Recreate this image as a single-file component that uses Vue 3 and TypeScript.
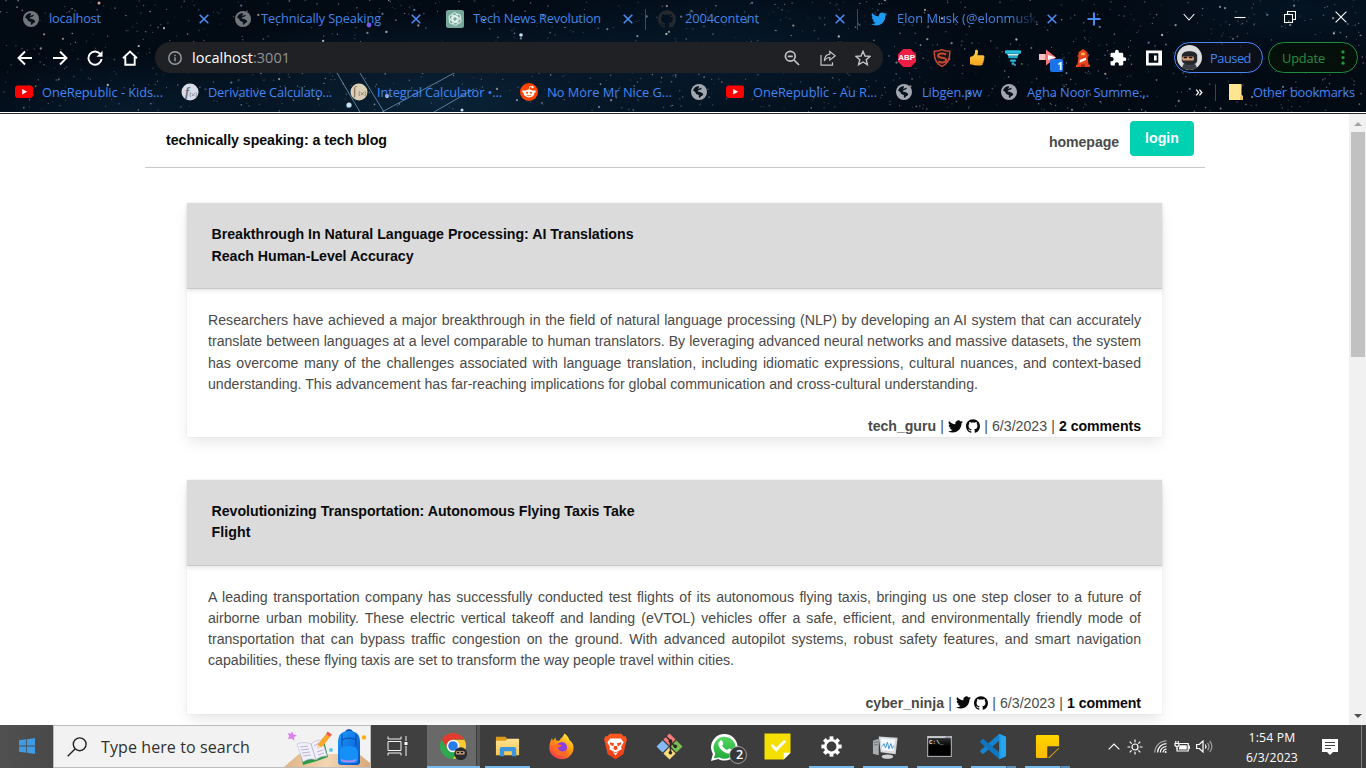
<script setup lang="ts">
interface Tab { icon: string; title: string; w: number; sep?: boolean; fade?: boolean }
interface Mark { text: string; kind: string }
interface Bookmark { icon: string; title?: string; w?: number; marks?: Mark[] }
interface Extension { icon: string; mark?: Mark }
interface Post {
  title: { text: string; w: number }[]
  lines: string[]
  lastWidth: number
  author: string
  authorWidth: number
  date: string
  comments: string
  commentsWidth: number
}
interface Task { icon: string; state?: 'full' | 'group' | 'active'; mark?: Mark }
interface Star { x: number; y: number; r: number; o: number; c: string }

// Spreads a label's glyphs so that it takes the given width in pixels.
const vFit = {
  mounted(el: HTMLElement, binding: { value: number }) {
    const n = (el.textContent ?? '').trim().length
    if (!n || !binding.value) return
    const natural = el.getBoundingClientRect().width
    el.style.letterSpacing = `${(binding.value - natural) / n}px`
  },
}

const tabs: Tab[] = [
  { icon: 'globe-dim', title: 'localhost', w: 52 },
  { icon: 'globe-dim', title: 'Technically Speaking', w: 120 },
  { icon: 'gpt', title: 'Tech News Revolution', w: 128 },
  { icon: 'github-dim', title: '2004content', w: 74, sep: true },
  { icon: 'twitter-blue', title: 'Elon Musk (@elonmusk)', w: 143, sep: true, fade: true },
]

const extensions: Extension[] = [
  { icon: 'abp', mark: { text: 'ABP', kind: 'm-abp' } },
  { icon: 'seo' },
  { icon: 'thumb' },
  { icon: 'funnel' },
  { icon: 'arrow-ext', mark: { text: '1', kind: 'm-one' } },
  { icon: 'lighthouse' },
  { icon: 'puzzle' },
  { icon: 'panel' },
]

const bookmarks: Bookmark[] = [
  { icon: 'youtube', title: 'OneRepublic - Kids...', w: 121 },
  { icon: 'deriv', title: 'Derivative Calculato...', w: 124, marks: [{ text: 'f', kind: 'm-f' }] },
  { icon: 'integ', title: 'Integral Calculator •...', w: 125, marks: [{ text: '∫', kind: 'm-int' }] },
  { icon: 'reddit', title: 'No More Mr Nice G...', w: 125 },
  { icon: 'globe' },
  { icon: 'youtube', title: 'OneRepublic - Au R...', w: 124 },
  { icon: 'globe', title: 'Libgen.pw', w: 60 },
  { icon: 'globe', title: 'Agha Noor Summe...', w: 122 },
]

const posts: Post[] = [
  {
    title: [
      { text: 'Breakthrough In Natural Language Processing: AI Translations', w: 422 },
      { text: 'Reach Human-Level Accuracy', w: 202 },
    ],
    lines: [
      'Researchers have achieved a major breakthrough in the field of natural language processing (NLP) by developing an AI system that can accurately',
      'translate between languages at a level comparable to human translators. By leveraging advanced neural networks and massive datasets, the system',
      'has overcome many of the challenges associated with language translation, including idiomatic expressions, cultural nuances, and context-based',
      'understanding. This advancement has far-reaching implications for global communication and cross-cultural understanding.',
    ],
    lastWidth: 770,
    author: 'tech_guru',
    authorWidth: 68,
    date: '6/3/2023',
    comments: '2 comments',
    commentsWidth: 82,
  },
  {
    title: [
      { text: 'Revolutionizing Transportation: Autonomous Flying Taxis Take', w: 423 },
      { text: 'Flight', w: 39 },
    ],
    lines: [
      'A leading transportation company has successfully conducted test flights of its autonomous flying taxis, bringing us one step closer to a future of',
      'airborne urban mobility. These electric vertical takeoff and landing (eVTOL) vehicles offer a safe, efficient, and environmentally friendly mode of',
      'transportation that can bypass traffic congestion on the ground. With advanced autopilot systems, robust safety features, and smart navigation',
      'capabilities, these flying taxis are set to transform the way people travel within cities.',
    ],
    lastWidth: 526,
    author: 'cyber_ninja',
    authorWidth: 78.5,
    date: '6/3/2023',
    comments: '1 comment',
    commentsWidth: 74,
  },
]

const tasks: Task[] = [
  { icon: 'chrome', state: 'active' },
  { icon: 'explorer', state: 'full' },
  { icon: 'firefox' },
  { icon: 'brave' },
  { icon: 'git' },
  { icon: 'whatsapp', mark: { text: '2', kind: 'm-two' } },
  { icon: 'tasks' },
  { icon: 'gear', state: 'full' },
  { icon: 'monitor', state: 'full' },
  { icon: 'cmd', state: 'full', mark: { text: 'C:\\_', kind: 'm-cmd' } },
  { icon: 'vscode', state: 'group' },
  { icon: 'sticky', state: 'group' },
]

const stars: Star[] = []
let seed = 20230603
function rnd(): number {
  seed = (seed * 1664525 + 1013904223) % 4294967296
  return seed / 4294967296
}
const starColors = ['#8aa0b4', '#b9a79c', '#5f8fb4', '#d6dce2']
for (let i = 0; i < 1250; i++) {
  const big = rnd() > 0.93
  stars.push({
    x: Math.round(rnd() * 13660) / 10,
    y: Math.round(rnd() * 1120) / 10,
    r: big ? 1.15 : 0.5 + rnd() * 0.4,
    o: big ? 0.8 : 0.2 + rnd() * 0.45,
    c: starColors[Math.floor(rnd() * 4)],
  })
}
</script>

<template>
  <div class="screen">
    <svg class="sprite" aria-hidden="true">
      <defs>
        <linearGradient id="g-thumb" x1="0" y1="0" x2="0" y2="1"><stop offset="0" stop-color="#ffd54a" /><stop offset="1" stop-color="#f5a31d" /></linearGradient>
        <linearGradient id="g-pack" x1="0" y1="0" x2="1" y2="1"><stop offset="0" stop-color="#1c9bff" /><stop offset="1" stop-color="#0552c8" /></linearGradient>
        <linearGradient id="g-fox" x1="0.8" y1="0" x2="0.2" y2="1"><stop offset="0" stop-color="#fff04a" /><stop offset="0.45" stop-color="#ff980e" /><stop offset="1" stop-color="#f52f50" /></linearGradient>
        <linearGradient id="g-brave" x1="0" y1="0" x2="0" y2="1"><stop offset="0" stop-color="#ff5a1f" /><stop offset="1" stop-color="#ee3a17" /></linearGradient>
        <linearGradient id="g-wa" x1="0" y1="0" x2="0" y2="1"><stop offset="0" stop-color="#52d860" /><stop offset="1" stop-color="#22a93a" /></linearGradient>
        <linearGradient id="g-folder" x1="0" y1="0" x2="0" y2="1"><stop offset="0" stop-color="#ffe292" /><stop offset="1" stop-color="#f8c750" /></linearGradient>
        <linearGradient id="g-sticky" x1="0" y1="0" x2="0" y2="1"><stop offset="0" stop-color="#ffd600" /><stop offset="1" stop-color="#fcb900" /></linearGradient>
        <linearGradient id="g-desk" x1="0" y1="0" x2="1" y2="0"><stop offset="0" stop-color="#dfb386" /><stop offset="0.5" stop-color="#f2d6b3" /><stop offset="1" stop-color="#d9a878" /></linearGradient>
        <linearGradient id="g-cmd" x1="0" y1="0" x2="0" y2="1"><stop offset="0" stop-color="#3a3a3a" /><stop offset="0.5" stop-color="#000" /></linearGradient>
      </defs>
      <symbol id="globe" viewBox="0 0 16 16">
        <circle cx="8" cy="8" r="8" fill="#a3a8b0" />
        <path d="M2 6.5c1-2.6 3-4.2 5.6-4.4.8.9.2 1.8-.5 2.4.9.6 2.4-.3 3-1 .9.5.7 1.500-.2 2-1 .4-2.600.7-3.200 1.600-.2.8 1.700.6 2.300 1 1.200.5 2.400.700 3.200 1.800.2 1.300-1.200 2-2.200 2.300-.4.700-.8 1.500-1.800 1.600-.8-.7 0-1.900-.4-2.800-.7-.6-2-.5-2.700-1.300C4.400 8.500 4 7.300 2 6.500z" fill="#08131d" />
      </symbol>
      <symbol id="globe-dim" viewBox="0 0 16 16">
        <circle cx="8" cy="8" r="8" fill="#72777c" />
        <path d="M2 6.5c1-2.6 3-4.2 5.6-4.4.8.9.2 1.8-.5 2.4.9.6 2.4-.3 3-1 .9.5.7 1.500-.2 2-1 .4-2.600.7-3.200 1.600-.2.8 1.700.6 2.300 1 1.200.5 2.400.700 3.200 1.800.2 1.300-1.200 2-2.200 2.300-.4.700-.8 1.500-1.800 1.600-.8-.7 0-1.900-.4-2.800-.7-.6-2-.5-2.700-1.300C4.400 8.500 4 7.300 2 6.500z" fill="#08131d" />
      </symbol>
      <symbol id="gpt" viewBox="0 0 18 18">
        <rect width="18" height="18" rx="2.500" fill="#75a99c" />
        <g fill="none" stroke="#e4f1ed" stroke-width=".9">
          <rect x="6" y="2.700" width="5.200" height="9" rx="2.600" />
          <rect x="6" y="2.700" width="5.200" height="9" rx="2.600" transform="rotate(60 9 9)" />
          <rect x="6" y="2.700" width="5.200" height="9" rx="2.600" transform="rotate(120 9 9)" />
          <rect x="6" y="2.700" width="5.200" height="9" rx="2.600" transform="rotate(180 9 9)" />
          <rect x="6" y="2.700" width="5.200" height="9" rx="2.600" transform="rotate(240 9 9)" />
          <rect x="6" y="2.700" width="5.200" height="9" rx="2.600" transform="rotate(300 9 9)" />
        </g>
      </symbol>
      <symbol id="github" viewBox="0 0 24 24">
        <path d="M12 .297c-6.630 0-12 5.373-12 12 0 5.303 3.438 9.800 8.205 11.385.6.113.82-.258.82-.577 0-.285-.01-1.040-.015-2.040-3.338.724-4.042-1.610-4.042-1.610C4.422 18.070 3.633 17.700 3.633 17.700c-1.087-.744.084-.729.084-.729 1.205.084 1.838 1.236 1.838 1.236 1.070 1.835 2.809 1.305 3.495.998.108-.776.417-1.305.76-1.605-2.665-.3-5.466-1.332-5.466-5.930 0-1.310.465-2.380 1.235-3.220-.135-.303-.54-1.523.105-3.176 0 0 1.005-.322 3.300 1.230.96-.267 1.980-.399 3-.405 1.020.006 2.040.138 3 .405 2.280-1.552 3.285-1.230 3.285-1.230.645 1.653.24 2.873.12 3.176.765.84 1.230 1.910 1.230 3.220 0 4.610-2.805 5.625-5.475 5.920.42.36.81 1.096.81 2.220 0 1.606-.015 2.896-.015 3.286 0 .315.21.69.825.57C20.565 22.092 24 17.592 24 12.297c0-6.627-5.373-12-12-12" fill="currentColor" />
      </symbol>
      <symbol id="github-dim" viewBox="0 0 24 24"><use href="#github" color="#25292e" /></symbol>
      <symbol id="twitter" viewBox="0 0 24 24">
        <path d="M23.953 4.570a10 10 0 01-2.825.775 4.958 4.958 0 002.163-2.723c-.951.555-2.005.959-3.127 1.184a4.920 4.920 0 00-8.384 4.482C7.690 8.095 4.067 6.130 1.640 3.162a4.822 4.822 0 00-.666 2.475c0 1.710.87 3.213 2.188 4.096a4.904 4.904 0 01-2.228-.616v.06a4.923 4.923 0 003.946 4.827 4.996 4.996 0 01-2.212.085 4.936 4.936 0 004.604 3.417 9.867 9.867 0 01-6.102 2.105c-.39 0-.779-.023-1.170-.067a13.995 13.995 0 007.557 2.209c9.053 0 13.998-7.496 13.998-13.985 0-.21 0-.42-.015-.63A9.935 9.935 0 0024 4.590z" fill="currentColor" />
      </symbol>
      <symbol id="twitter-blue" viewBox="0 0 24 24"><use href="#twitter" color="#1d9bf0" /></symbol>
      <symbol id="youtube" viewBox="0 0 18 18">
        <rect y="2.500" width="18" height="12.500" rx="3" fill="#f00" />
        <path d="M7.200 6l5 2.800-5 2.800z" fill="#fff" />
      </symbol>
      <symbol id="deriv" viewBox="0 0 18 18">
        <circle cx="9" cy="9" r="8.500" fill="#d9dce6" />
        <path d="M9.500 9.300q-1.200 2.300 0 4.600M15 9.300q1.200 2.300 0 4.600M10.700 10.200l3 3M13.700 10.200l-3 3" fill="none" stroke="#788096" stroke-width=".8" />
      </symbol>
      <symbol id="integ" viewBox="0 0 18 18">
        <circle cx="9" cy="9" r="8.500" fill="#dccfb8" />
        <path d="M9.500 8.300q-1.200 2.300 0 4.600M15 8.300q1.200 2.300 0 4.600M10.700 9.200l3 3M13.700 9.200l-3 3" fill="none" stroke="#84775f" stroke-width=".8" />
      </symbol>
      <symbol id="reddit" viewBox="0 0 18 18">
        <circle cx="9" cy="9" r="9" fill="#ff4500" />
        <circle cx="3.700" cy="8.600" r="1.400" fill="#fff" /><circle cx="14.300" cy="8.600" r="1.400" fill="#fff" />
        <ellipse cx="9" cy="10.500" rx="5.300" ry="3.900" fill="#fff" />
        <path d="M9 6.800l.8-3.300 2.600.6" fill="none" stroke="#fff" stroke-width=".8" /><circle cx="12.600" cy="4.200" r="1.100" fill="#fff" />
        <circle cx="7" cy="9.700" r="1.050" fill="#ff4500" /><circle cx="11" cy="9.700" r="1.050" fill="#ff4500" />
        <path d="M6.800 12.200q2.200 1.300 4.400 0" fill="none" stroke="#ff4500" stroke-width=".8" />
      </symbol>
      <symbol id="abp" viewBox="0 0 18 18">
        <path d="M5.300 0h7.400L18 5.300v7.400L12.700 18H5.300L0 12.700V5.300z" fill="#ed1e45" />
      </symbol>
      <symbol id="seo" viewBox="0 0 18 18">
        <path d="M9 .6C11.500 1.900 14 2.300 16.700 2.300c.5 6.500-.7 11.700-7.700 15.100C2 14 .8 8.800 1.300 2.300 4 2.300 6.500 1.900 9 .6z" fill="#1d1214" stroke="#c34a36" stroke-width="1.500" />
        <path d="M13 5.500C9.500 3.700 5 4.300 5 6.700c0 3 8.200 1.200 8.200 4.300 0 2.500-4.500 3.200-8 1.300" fill="none" stroke="#c34a36" stroke-width="2" />
      </symbol>
      <symbol id="thumb" viewBox="0 0 18 18">
        <path d="M2 8l3-1c2-1.300 2-3.500 2.100-5.200C7.200.1 10 .3 10 2.600c0 1.600-.4 2.600-.6 3.700h5.200c2.200 0 2.200 2.500.9 2.900 1.100.6.9 2.300-.3 2.600.8.8.4 2.100-.6 2.400.4 1.300-.5 2.300-2.100 2.300H8c-2.500 0-4-1.200-6-1.200z" fill="url(#g-thumb)" />
      </symbol>
      <symbol id="funnel" viewBox="0 0 18 18">
        <rect x="1" y="1.300" width="16" height="3.400" rx="1" fill="#28bfe0" /><path d="M3 5h12l-1.300 1.700H4.300z" fill="#d7f4f8" /><rect x="4.200" y="6.700" width="9.600" height="2.500" rx="1" fill="#24a9cf" /><rect x="6" y="10.400" width="6" height="2.300" rx="1" fill="#28bfe0" /><circle cx="9" cy="14.500" r="1.500" fill="#24a9cf" />
      </symbol>
      <symbol id="arrow-ext" viewBox="0 0 26 26">
        <path d="M1 7h7V2.500l10 8-10 8V13H1z" fill="#f4777c" /><path d="M1 7h6v6H1z" fill="#f9bec0" /><path d="M10 8l8 2.500-8 2.500z" fill="#fff" />
        <rect x="12" y="12" width="13" height="13" rx="2" fill="#1a73e8" />
      </symbol>
      <symbol id="lighthouse" viewBox="0 0 18 18">
        <path d="M9 0l4.500 3.200v3h1v1.600h-1l1.200 8H16V18H2v-2.200h1.300l1.200-8h-1V6.200h1v-3z" fill="#e8431f" />
        <path d="M7.200 3.800h3.600v2.400H7.200z" fill="#ffc04b" /><path d="M5.800 11l6-2.600.3 2.500-6.500 2.900z" fill="#fff" /><path d="M7 15.500h4V18H7z" fill="#9d2714" />
      </symbol>
      <symbol id="puzzle" viewBox="0 0 24 24">
        <path d="M20.500 11H19V7c0-1.100-.9-2-2-2h-4V3.500a2.500 2.500 0 00-5 0V5H4c-1.100 0-1.990.9-1.990 2v3.800H3.500c1.490 0 2.700 1.210 2.700 2.700s-1.210 2.700-2.700 2.700H2V20c0 1.100.9 2 2 2h3.800v-1.500c0-1.490 1.210-2.700 2.700-2.700 1.490 0 2.700 1.210 2.700 2.700V22H17c1.100 0 2-.9 2-2v-4h1.500a2.500 2.500 0 000-5z" fill="#fff" />
      </symbol>
      <symbol id="panel" viewBox="0 0 18 18"><path fill-rule="evenodd" d="M1 1.500h16v15H1zM3.700 4.200v9.600h9.600V4.200z" fill="#fff" /><path d="M9 6.500h2.700v5H9z" fill="#fff" /></symbol>
      <symbol id="ninja" viewBox="0 0 26 26">
        <circle cx="13" cy="13" r="13" fill="#dcdcdc" />
        <path d="M5.500 24c0-4 3-6 7-6s8 2 8 6c-4 2.500-11 2.500-15 0z" fill="#3a3d43" /><path d="M5 11c0-6 16-6 16 0v5c0 6-15 6-16 0z" fill="#24272c" /><rect x="5.500" y="12" width="12" height="4" rx="1" fill="#d9a074" /><path d="M7 13h3.500M12.500 13H16" stroke="#111" stroke-width="1.500" />
      </symbol>

      <symbol id="chrome" viewBox="0 0 28 28">
        <circle cx="13.500" cy="13.500" r="13.500" fill="#2da94f" />
        <path d="M13.500 7h11.800a13.500 13.500 0 01-11.800 20l6-10z" fill="#fcc934" /><path d="M1.800 6.800A13.500 13.500 0 0125.200 6.800H13.500L8 16.500z" fill="#e33b2e" />
        <circle cx="13.500" cy="13.500" r="6.500" fill="#fff" /><circle cx="13.500" cy="13.500" r="5" fill="#2a7de9" />
        <circle cx="21.500" cy="21.500" r="6.700" fill="#2a2c30" /><rect x="16.500" y="19" width="9" height="3.300" rx="1" fill="#d5a37c" /><path d="M17.500 20.400h2.500M21.500 20.400H24" stroke="#111" stroke-width="1.300" />
      </symbol>
      <symbol id="explorer" viewBox="0 0 28 28">
        <path d="M2 4h10l2 2.500h12V10H2z" fill="#dd9a1b" /><path d="M2 8h10l2-2h12v17H2z" fill="url(#g-folder)" />
        <path d="M6 24V16.500a2 2 0 012-2h13a2 2 0 012 2V24h-4.500v-5h-8v5z" fill="#3a95dc" />
      </symbol>
      <symbol id="firefox" viewBox="0 0 28 28">
        <path d="M17 .6c3.200 2.200 4.500 4.500 5.200 6.600 3 2.300 4.500 5 4.300 8.500-.4 6.500-5.500 11.400-12.300 11.400S1.500 22 1.400 15.500C1.300 11.500 2.500 8 4.200 5.300L5 8l2.800-3.300.6 3L11.500 8C13.500 5 16 4 17 .6z" fill="url(#g-fox)" />
        <circle cx="14.300" cy="14.800" r="5.500" fill="#8a3fe0" /><path d="M5 13c3.500-2 7-1 9.300-.2-1 2-3 2-4 2.500.6 4 6.500 5.500 9.500 1.200.3 4-3 6.400-6.800 6.400-4.500 0-8-4-8-9.900z" fill="#ff6b24" />
      </symbol>
      <symbol id="brave" viewBox="0 0 28 28">
        <path d="M8 .8h12l2.500 2.700 1.800-.3 1.600 3.600-1 3-2.600 12L14 27.500 5.700 21.800 3.100 9.800l-1-3 1.600-3.600 1.800.3z" fill="url(#g-brave)" />
        <path d="M8.500 5.700h11l3 4-2.700 4.600.7 2.500-3.200 1.700-3.300 5-3.300-5-3.200-1.700.7-2.500-2.700-4.600z" fill="#fff" />
        <path d="M8 9.500l4.500 1-1 3.500-3-2zM20 9.500l-4.500 1 1 3.500 3-2zM12.500 13.500h3l.7 3L14 18l-2.200-1.500zM10 18.300L14 20l4-1.700-4 2.700z" fill="#f04a1c" />
      </symbol>
      <symbol id="git" viewBox="0 0 28 28">
        <path d="M14 .5l6.300 6.300L14 13.100 7.700 6.800z" fill="#f47c7c" /><path d="M6.800 7.700l6.300 6.300-6.300 6.300L.5 14z" fill="#86b9f7" /><path d="M21.200 7.700l6.300 6.300-6.300 6.300-6.300-6.300z" fill="#79bf52" /><path d="M14 14.900l6.300 6.300-6.300 6.300-6.300-6.300z" fill="#fbdc7b" />
        <path d="M10 3l5 5v13M15 9l5 5" fill="none" stroke="#2e2923" stroke-width="1.500" /><circle cx="15" cy="8.500" r="1.900" fill="#2e2923" /><circle cx="20" cy="13.800" r="1.900" fill="#2e2923" /><circle cx="15" cy="20.500" r="1.900" fill="#2e2923" />
      </symbol>
      <symbol id="whatsapp" viewBox="0 0 38 32">
        <path d="M1 28l1.900-7A13.300 13.300 0 1114.600 27.500c-2.300 0-4.400-.5-6.300-1.500z" fill="#fff" />
        <path d="M3.900 25.200l1.300-4.700a11 11 0 114.300 4z" fill="url(#g-wa)" />
        <path d="M10.300 7.700c.6-.6 1.600-.6 1.900.1l1.100 2.600c.2.700-1.200 1.800-1 2.300 1 2 2.700 3.300 4.800 4.200.5.1 1.600-1.700 2.200-1.500l2.700 1.300c.8.400-.1 3.900-3.700 3.900-4 0-10-5.300-10-9.500 0-1.500.8-2.500 2-3.400z" fill="#fff" />
        <circle cx="28" cy="22" r="8.500" fill="#373737" stroke="#c8c8c8" stroke-width=".7" />
      </symbol>
      <symbol id="tasks" viewBox="0 0 28 28">
        <path d="M.5.5h27v20l-7 7H.5z" fill="#f5df00" /><path d="M20.500 20.500h7l-7 7z" fill="#fff" /><path d="M8 12.500l4.700 4.700L22 8" fill="none" stroke="#fff" stroke-width="3" />
      </symbol>
      <symbol id="gear" viewBox="0 0 28 28">
        <circle cx="14" cy="14" r="6.500" fill="none" stroke="#fff" stroke-width="2.800" />
        <g fill="#fff"><path id="tooth" d="M12 3.500h4v4h-4z" /><use href="#tooth" transform="rotate(45 14 14)" /><use href="#tooth" transform="rotate(90 14 14)" /><use href="#tooth" transform="rotate(135 14 14)" /><use href="#tooth" transform="rotate(180 14 14)" /><use href="#tooth" transform="rotate(225 14 14)" /><use href="#tooth" transform="rotate(270 14 14)" /><use href="#tooth" transform="rotate(315 14 14)" /></g>
      </symbol>
      <symbol id="monitor" viewBox="0 0 28 28">
        <path d="M1 8l6-2v17l-6-1.500z" fill="#a9acb0" /><path d="M2 10l4-.8M2 12.500l4-.6" stroke="#6d7277" /><ellipse cx="16" cy="24.500" rx="6" ry="2.300" fill="#cfd2d5" />
        <path d="M7 3.500l19.500 1.500-2 17L9 20z" fill="#d4d8dc" /><path d="M9 5.500l15 1.200-1.600 12.300-12-1.200z" fill="#f2f8fc" />
        <path d="M10.500 14l2-3 1.500 4.500 2-6 1.500 7 2-5.500 1.500 5 1.500-3" fill="none" stroke="#3d94cf" stroke-width="1" />
      </symbol>
      <symbol id="cmd" viewBox="0 0 28 28">
        <rect x="1.700" y="3.700" width="24.600" height="20.600" fill="url(#g-cmd)" stroke="#a4a8ac" stroke-width="1.200" /><rect x="1.500" y="3.300" width="25" height="2" fill="#c6cacd" /><rect x="20" y="3.800" width="5" height="1" fill="#6c7784" />
      </symbol>
      <symbol id="vscode" viewBox="0 0 28 28">
        <path d="M20 .8l7 3.200v20l-7 3.200z" fill="#24a5f0" /><path d="M20 .8V8L4 21.300c-.7.6-1.500.5-2 0L.6 19.800c-.6-.6-.5-1.300 0-1.800z" fill="#1583cf" /><path d="M20 27.200V20L4 6.700c-.7-.6-1.500-.5-2 0L.6 8.200c-.6.6-.5 1.300 0 1.800z" fill="#0f76c2" /><path d="M20 .8l1.500.7v25L20 27.200z" fill="#1f98e6" />
      </symbol>
      <symbol id="sticky" viewBox="0 0 28 28">
        <path d="M3.500 2h21Q26 2 26 3.500V14H14v12H3.500Q2 26 2 24.500v-21Q2 2 3.500 2z" fill="url(#g-sticky)" /><path d="M14 14h12v1L15 26h-1z" fill="#403c3a" /><path d="M26 15v1L16.500 25.500l-.7.500H14.500z" fill="#f0ad00" />
      </symbol>
    </svg>

    <header class="browser">
      <svg class="sky" viewBox="0 0 1366 112" preserveAspectRatio="none" aria-hidden="true">
        <defs>
          <radialGradient id="neb1"><stop offset="0" stop-color="#0a2338" /><stop offset="1" stop-color="#0a2338" stop-opacity="0" /></radialGradient>
          <radialGradient id="neb2"><stop offset="0" stop-color="#061a2c" /><stop offset="1" stop-color="#061a2c" stop-opacity="0" /></radialGradient>
        </defs>
        <rect width="1366" height="112" fill="#020a14" />
        <ellipse cx="440" cy="100" rx="300" ry="90" fill="url(#neb1)" />
        <ellipse cx="720" cy="60" rx="260" ry="90" fill="url(#neb2)" />
        <ellipse cx="130" cy="110" rx="180" ry="60" fill="url(#neb2)" />
        <ellipse cx="1300" cy="10" rx="200" ry="60" fill="url(#neb2)" opacity=".6" />
        <path d="M337 73l23 39M360 73l24 39M382 112l74-40M434 112l40-23" fill="none" stroke="#7fa8c6" stroke-width="1" opacity=".7" />
        <circle v-for="(s, i) in stars" :key="i" :cx="s.x" :cy="s.y" :r="s.r" :fill="s.c" :opacity="s.o" />
        <g fill="#c4e2f5"><circle cx="349" cy="105" r="2.600" /><circle cx="521" cy="35" r="1.800" /><circle cx="387" cy="96" r="1.900" /><circle cx="369" cy="25" r="2.400" fill="#7658f0" /><circle cx="462" cy="110" r="1.500" /><circle cx="99" cy="3" r="1.500" fill="#e0a090" /></g>
      </svg>

      <div class="tabstrip">
        <div v-for="(t, i) in tabs" :key="i" class="tab" :class="{ sep: t.sep }">
          <svg class="favicon" :class="{ large: t.icon === 'gpt' || t.icon === 'github-dim' }"><use :href="'#' + t.icon" /></svg>
          <span class="tab-title" :class="{ fade: t.fade }"><span v-fit="t.w" class="lbl">{{ t.title }}</span></span>
          <svg class="tab-x" viewBox="0 0 10 10"><path d="M.7.7l8.600 8.600M9.300.7L.7 9.300" /></svg>
        </div>
        <svg class="plus" viewBox="0 0 14 14"><path d="M7 .5v13M.5 7h13" /></svg>
        <div class="win">
          <svg viewBox="0 0 12 12"><path d="M.7 3l5.300 6 5.300-6" /></svg>
          <svg viewBox="0 0 12 12"><path d="M.5 6.500h11" /></svg>
          <svg viewBox="0 0 12 12"><path d="M.5 3.500h8v8h-8zM3.500 3V.5h8v8H9" /></svg>
          <svg viewBox="0 0 12 12"><path d="M.6.6l10.800 10.800M11.400.6L.6 11.400" /></svg>
        </div>
      </div>

      <div class="toolbar">
        <div class="nav">
          <svg viewBox="0 0 16 16"><path d="M15 8H1.800M8 1.500L1.500 8 8 14.500" /></svg>
          <svg viewBox="0 0 16 16"><path d="M1 8h13.200M8 1.500L14.500 8 8 14.500" /></svg>
          <svg viewBox="0 0 16 16"><path d="M13.500 4.300A6.600 6.600 0 1014.600 9" /><path d="M15.500 .8v6h-6z" fill="#fff" stroke="none" /></svg>
          <svg viewBox="0 0 16 16"><path d="M1 8.300L8 1.500l7 6.800M3.300 7v7.700h9.400V7" /></svg>
        </div>
        <div class="omnibox">
          <svg class="info" viewBox="0 0 14 14"><circle cx="7" cy="7" r="6.200" /><path d="M7 6.300V10.300M7 3.700v1.500" /></svg>
          <span class="url"><span v-fit="61" class="lbl host">localhost</span><span v-fit="37" class="lbl port">:3001</span></span>
          <svg class="act" viewBox="0 0 16 16"><circle cx="6.300" cy="6.300" r="4.900" /><path d="M3.800 6.300h5M10 10l5 5" /></svg>
          <svg class="act" viewBox="0 0 16 16"><path d="M1 5v10.200h11.500v-3" stroke-width="1.200" /><path d="M9.800 1.500l5.400 4.300-5.400 4.300V7.500C7.300 7.500 5.500 8.800 4.300 11 4.600 7 6.600 4.500 9.800 4.200z" stroke-width="1.200" /></svg>
          <svg class="act" viewBox="0 0 16 16"><path d="M8 1.300l2 4.700 5 .4-3.800 3.300 1.200 5L8 12l-4.400 2.700 1.200-5L1 6.400l5-.4z" stroke-width="1.400" /></svg>
        </div>
        <div class="exts">
          <span v-for="e in extensions" :key="e.icon" class="ext">
            <svg :class="{ wide: e.icon === 'arrow-ext' }"><use :href="'#' + e.icon" /></svg>
            <span v-if="e.mark" class="mark" :class="e.mark.kind">{{ e.mark.text }}</span>
          </span>
        </div>
        <div class="pill paused"><svg class="avatar"><use href="#ninja" /></svg><span v-fit="41" class="lbl">Paused</span></div>
        <div class="pill update"><span v-fit="43" class="lbl">Update</span><svg class="dots" viewBox="0 0 4 16"><circle cx="2" cy="2" r="1.700" /><circle cx="2" cy="8" r="1.700" /><circle cx="2" cy="14" r="1.700" /></svg></div>
      </div>

      <div class="bookmarks">
        <div v-for="(b, i) in bookmarks" :key="i" class="bm">
          <svg :class="{ small: b.icon === 'globe' }"><use :href="'#' + b.icon" /></svg>
          <span v-for="m in b.marks ?? []" :key="m.kind" class="mark" :class="m.kind">{{ m.text }}</span>
          <span v-if="b.title" class="bm-title" :style="{ width: b.w + 'px' }"><span v-fit="b.w" class="lbl">{{ b.title }}</span></span>
        </div>
        <div class="bm-right">
          <svg class="more" viewBox="0 0 8 8"><path d="M.8.8L3.500 4 .8 7.200M4.500.8L7.200 4 4.500 7.200" /></svg>
          <span class="bm-sep"></span>
          <svg class="folder" viewBox="0 0 14 16"><path d="M0 0h12.500v11L14 12v4H0z" fill="#ffe58f" /><path d="M11 16v-3l1.500-2L14 12.500V16z" fill="#e9c75c" /></svg>
          <span v-fit="102" class="lbl">Other bookmarks</span>
        </div>
      </div>
    </header>

    <div class="viewport">
      <main class="page">
        <nav class="topnav">
          <h1><span v-fit="221" class="lbl">technically speaking: a tech blog</span></h1>
          <a class="home"><span v-fit="70" class="lbl">homepage</span></a>
          <a class="login"><span v-fit="34" class="lbl">login</span></a>
        </nav>
        <article v-for="p in posts" :key="p.author" class="card">
          <h2><span v-for="l in p.title" :key="l.text" class="title-line"><span v-fit="l.w" class="lbl">{{ l.text }}</span></span></h2>
          <div class="copy">
            <p v-for="(l, i) in p.lines" :key="i" :class="{ last: i === p.lines.length - 1 }"><span v-if="i === p.lines.length - 1" v-fit="p.lastWidth" class="lbl">{{ l }}</span><template v-else>{{ l }}</template></p>
          </div>
          <footer>
            <b v-fit="p.authorWidth" class="lbl">{{ p.author }}</b><span class="bar">|</span>
            <svg><use href="#twitter" /></svg><svg class="gh"><use href="#github" /></svg><span class="bar">|</span>
            <span v-fit="55" class="lbl">{{ p.date }}</span><span class="bar">|</span>
            <b v-fit="p.commentsWidth" class="lbl count">{{ p.comments }}</b>
          </footer>
        </article>
      </main>
      <div class="scrollbar">
        <svg viewBox="0 0 8 4"><path d="M4 0l4 4H0z" fill="#a3a3a3" /></svg>
        <div class="thumb"></div>
        <svg class="down" viewBox="0 0 8 4"><path d="M4 4L0 0h8z" fill="#505050" /></svg>
      </div>
    </div>

    <div class="taskbar">
      <div class="start"><svg viewBox="0 0 16 16"><path d="M0 2.300L7 1.300V7.600H0zM7.800 1.200L16 0v7.600H7.800zM0 8.400h7v6.300l-7-1zM7.800 8.400H16V16l-8.200-1.200z" fill="#3f9be4" /></svg></div>
      <div class="search">
        <svg class="mag" viewBox="0 0 20 20"><circle cx="12.700" cy="7.300" r="6.400" /><path d="M8 12L.7 19.300" /></svg>
        <span v-fit="149" class="lbl">Type here to search</span>
        <svg class="art" viewBox="0 0 87 41">
          <path d="M1 41L16 28h60l11 9v4z" fill="url(#g-desk)" />
          <path d="M9 5.500l1.500 3 3.500.8-3 1.900.3 3.600-2.800-2.400-3.500.9 1.400-3.200L4.500 7l3.300.8z" fill="#e07cf2" />
          <path d="M16 21l14-2 11-5 4 17-11 4-14 4z" fill="#2e9a4b" /><path d="M14 18c5-2 9-2 14 0 3-3 7-4 11-4l5 16c-5 0-8 1-11 4-4-2-9-1-13 2z" fill="#f2f0fa" stroke="#b9b5cf" stroke-width=".6" />
          <path d="M28 18l5 16M17 21l8-1M18 24l8-1M19 27l8-1M20 30l8-1M31 20l5-3M34 26l6-2M35 29l6-2" stroke="#a9a5c4" stroke-width=".8" fill="none" />
          <path d="M34 23l1-5L43 8l4 3-7 9z" fill="#f8a62c" /><path d="M43 8l1.500-2.500 4.500 3L47 11z" fill="#f25a4d" /><path d="M34 23l1-4 3 2z" fill="#f5dcc0" />
          <circle cx="48" cy="24" r="2" fill="#5cc8e6" /><circle cx="81" cy="11.500" r="2.200" fill="#fbad18" />
          <path d="M62 7q4-6 8 0" fill="none" stroke="#0757b5" stroke-width="2" /><path d="M55 16Q55 5 66 5t11 11v20q0 3-3 3H58q-3 0-3-3z" fill="url(#g-pack)" />
          <path d="M59 14q7-4 14 0M59 8v12M73 8v12" fill="none" stroke="#0b49a5" stroke-width="1" /><path d="M57 27q0-7 9-7t9 7v7q0 3-3 3H60q-3 0-3-3z" fill="#168ff6" /><path d="M58 33q8 3 15 0v2q-7 3-15 0z" fill="#b48bf5" />
        </svg>
      </div>
      <div class="taskview"><svg viewBox="0 0 21 20"><path d="M1 5.500h13v9H1zM1 .5V3M14 .5V3M1 3h13M1 19.500V17M14 19.500V17M1 17h13M19 0v5M19 10v10" /><path d="M17.500 6h3v3h-3z" fill="#fff" stroke="none" /></svg></div>
      <div v-for="t in tasks" :key="t.icon" class="task" :class="t.state">
        <svg :class="{ wa: t.icon === 'whatsapp' }"><use :href="'#' + t.icon" /></svg>
        <span v-if="t.mark" class="mark" :class="t.mark.kind">{{ t.mark.text }}</span>
      </div>
      <div class="tray">
        <svg class="t-chev" viewBox="0 0 12 7"><path d="M.7 6.300L6 1l5.300 5.300" /></svg>
        <svg class="t-sun" viewBox="0 0 16 16"><circle cx="8" cy="8" r="3" /><path d="M8 .5v2.800M8 12.700v2.800M.5 8h2.800M12.700 8h2.800M2.700 2.700l2 2M11.300 11.300l2 2M13.300 2.700l-2 2M4.700 11.300l-2 2" /></svg>
        <svg class="t-wifi" viewBox="0 0 13 13"><path d="M.7 12.500A12 12 0 0112.500 .9" opacity=".55" /><path d="M3.500 12.500a9 9 0 019-8.800M6.300 12.500a6 6 0 016.200-6M9 12.500a3.300 3.300 0 013.500-3.300" /><circle cx="11.700" cy="12" r="1" fill="#fff" stroke="none" /></svg>
        <svg class="t-bat" viewBox="0 0 16 13"><path d="M5.500 3.500h8.700v7.500H3V8" /><path d="M6 5.200h6.700v4.300H5V7.500z" fill="#fff" stroke="none" /><path d="M15.300 5.500v3.500M1 3.500h4v2q-2 2-4 0zM1.800 1v2.500M4.200 1v2.500M3 6.500V9" /></svg>
        <svg class="t-vol" viewBox="0 0 17 13"><path d="M.6 4.500h2.700L7 1v11L3.300 8.500H.6z" /><path d="M9.300 4.500q1.500 2 0 4" /><path d="M11.500 2.800q3 3.700 0 7.400M13.700 1q4.500 5.500 0 11" opacity=".5" /></svg>
        <div class="clock"><span v-fit="47" class="lbl">1:54 PM</span><span v-fit="52" class="lbl">6/3/2023</span></div>
        <svg class="t-note" viewBox="0 0 16 16"><path d="M0 0h16v13h-5l-3 3-3-3H0z" fill="#fff" stroke="none" /><path d="M3 3.500h10M3 6.500h10M3 9.500h6" stroke="#444" /></svg>
        <span class="peek"></span>
      </div>
    </div>
  </div>
</template>

<style>
html, body { margin: 0; overflow: hidden; background: #fff; }
</style>

<style scoped>
.screen { width: 1366px; height: 768px; display: flex; flex-direction: column; overflow: hidden; background: #fff; font-family: "Open Sans", "Noto Sans", sans-serif; }
.screen *, .screen *::before, .screen *::after { box-sizing: border-box; }
.sprite { position: absolute; width: 0; height: 0; }
.lbl { display: inline-block; white-space: nowrap; flex: none; }
svg { display: block; flex: none; }

/* lettering that sits on top of an icon */
.mark { position: absolute; line-height: 1; white-space: nowrap; color: #fff; }
.m-abp { left: 0; right: 0; top: 5px; text-align: center; font: 700 8px/8px "Liberation Sans", sans-serif; }
.m-one { right: 2.500px; bottom: -5px; font-size: 10px; line-height: 12px; font-weight: 700; }
.m-two { left: 40px; top: 20.500px; font-size: 12.500px; line-height: 17px; font-weight: 600; }
.m-cmd { left: 17px; top: 14px; font: 700 6px/7px "Liberation Mono", monospace; color: #e6e6e6; }
.m-f { left: 4px; top: 2px; font: italic 700 13px/15px "Liberation Serif", serif; color: #687084; }
.m-int { left: 3px; top: 1px; font: 700 13px/15px "Liberation Serif", serif; color: #756850; }

.browser { position: relative; height: 114px; flex: none; border-bottom: 1px solid #2a2b2f; box-shadow: inset 0 -1px 0 #fff; font-size: 12.800px; color: #4285f4; }
.sky { position: absolute; left: 0; top: 0; width: 1366px; height: 112px; }
.tabstrip, .toolbar, .bookmarks { position: relative; display: flex; align-items: center; }
.tabstrip { height: 37px; padding-left: 9px; color: #4285e4; }
.tab { width: 212px; height: 37px; flex: none; display: flex; align-items: center; padding-left: 14px; }
.tab.sep { background: linear-gradient(#27507f, #27507f) 0 9px / 1px 21px no-repeat; }
.favicon { width: 16px; height: 16px; }
.favicon.large { width: 18px; height: 18px; margin: 0 -1px; }
.tab-title { width: 150px; margin-left: 10px; line-height: 20px; height: 21px; overflow: hidden; }
.tab-title.fade { width: 141px; margin-right: 9px; -webkit-mask-image: linear-gradient(90deg, #000 112px, transparent 143px); mask-image: linear-gradient(90deg, #000 112px, transparent 143px); }
.tab-x { width: 10px; height: 10px; fill: none; stroke: #4a8cf0; stroke-width: 1.600; }
.plus { width: 14px; height: 14px; margin-left: 18px; fill: none; stroke: #4a8cf0; stroke-width: 2; }
.win { display: flex; flex: none; margin: 0 0 4px 82px; gap: 38.700px; align-items: center; }
.win svg { width: 12px; height: 12px; fill: none; stroke: #fff; stroke-width: 1.100; }

.toolbar { height: 41px; padding-left: 7px; }
.nav { display: flex; width: 148px; }
.nav svg { width: 16px; height: 16px; margin: 0 9.600px; fill: none; stroke: #fff; stroke-width: 1.900; }
.omnibox { width: 728px; height: 31px; flex: none; border-radius: 16px; background: #202124; display: flex; align-items: center; padding: 0 12px 0 13px; }
.info { width: 14px; height: 14px; fill: none; stroke: #9aa0a6; stroke-width: 1.400; }
.url { flex: 1; display: flex; margin-left: 10px; font-size: 14.500px; line-height: 22px; }
.host { color: #fff; }
.port { color: #8f949a; }
.act { width: 16px; height: 16px; margin-left: 19.500px; fill: none; stroke: #c2c4c8; stroke-width: 1.700; }
.exts { display: flex; flex: none; width: 291px; padding-left: 6px; }
.ext { position: relative; width: 35.300px; height: 18px; flex: none; display: flex; justify-content: center; }
.ext svg { width: 18px; height: 18px; overflow: visible; }
.ext svg.wide { width: 26px; height: 26px; margin: -2px -6px 0 0; }
.pill { height: 31px; flex: none; border-radius: 16px; display: flex; align-items: center; }
.paused { width: 89px; border: 1.500px solid #4a86f5; background: rgba(14, 16, 26, .8); padding-left: 2px; gap: 8px; }
.avatar { width: 25px; height: 25px; }
.update { width: 90px; margin-left: 5px; border: 1.500px solid #1f8c3d; background: #041009; color: #2a8f45; padding-left: 13px; }
.dots { width: 4px; height: 15px; margin-left: 16px; fill: #25963f; }

.bookmarks { height: 30px; margin-top: -1px; padding-left: 15px; gap: 18px; }
.bm { position: relative; flex: none; display: flex; align-items: center; gap: 9px; height: 20px; }
.bm svg { width: 18px; height: 18px; }
.bm svg.small { width: 16px; height: 16px; margin: 0 1px; }
.bm-title { height: 20px; line-height: 20px; }
.bm-right { display: flex; align-items: center; margin-left: 28px; line-height: 20px; }
.more { width: 8px; height: 7px; fill: none; stroke: #fff; stroke-width: 1.500; }
.bm-sep { width: 1px; height: 17px; margin: 0 13px 0 12px; background: #3a4551; }
.folder { width: 14px; height: 16px; margin-right: 10px; }

.viewport { height: 611px; display: flex; flex: none; background: #fff; font-family: "Liberation Sans", Arial, sans-serif; font-size: 14.150px; color: #4a4a4a; }
.page { width: 1349px; height: 611px; overflow: hidden; }
.topnav { width: 1060px; height: 54px; margin: 0 auto 35px 145px; border-bottom: 1px solid #c9c9c9; display: flex; padding: 7px 11px 0 21px; font-weight: 700; }
h1 { flex: 1; margin: 0; padding-top: 9px; font-size: 14.200px; line-height: 20px; color: #0a0a0a; }
.home { padding-top: 11px; line-height: 20px; margin-right: 11px; }
.login { width: 64px; height: 35px; border-radius: 4px; background: #00d1b2; color: #fff; line-height: 34px; text-align: center; }
.card { width: 975px; height: 234px; margin: 0 0 42.600px 187px; background: #fff; box-shadow: 0 7px 14px -2px rgba(10, 10, 10, .1), 0 0 0 1px rgba(10, 10, 10, .02); }
h2 { height: 86px; margin: 0; padding: 21px 24.500px 0; background: #dbdbdb; border-bottom: 1px solid #c8c8c8; box-shadow: 0 2px 4px rgba(10, 10, 10, .1); font-size: 14.200px; line-height: 21.500px; color: #0a0a0a; }
.title-line { display: block; height: 21.500px; }
.copy { padding: 21px 21px 0; height: 127px; line-height: 21.250px; }
p { margin: 0; height: 21.250px; white-space: nowrap; text-align-last: justify; }
p.last { text-align-last: left; }
footer { display: flex; justify-content: flex-end; align-items: center; padding-right: 21px; height: 20px; line-height: 20px; }
footer svg { width: 15px; height: 15px; color: #0a0a0a; }
footer svg.gh { width: 14px; height: 14px; margin-left: 3px; }
.bar { width: 12px; text-align: center; }
.count { color: #0a0a0a; }
.scrollbar { width: 17px; background: #f1f1f1; display: flex; flex-direction: column; align-items: center; padding: 8px 0 7px; }
.scrollbar svg { width: 8px; height: 4px; margin-left: 1px; }
.thumb { width: 14px; height: 225px; margin-top: 6px; background: #c1c1c1; }
.scrollbar .down { margin-top: auto; }

.taskbar { height: 43px; flex: none; display: flex; background: #3d3d3d; color: #fff; }
.start { width: 53px; background: linear-gradient(90deg, #505050, #494949); display: flex; align-items: center; justify-content: center; padding-bottom: 1px; }
.start svg { width: 16px; height: 16px; }
.search { width: 318px; background: #f2f2f2; border: 1px solid #bdbdbd; display: flex; align-items: center; padding-left: 13px; color: #303030; font-size: 16px; }
.mag { width: 20px; height: 20px; margin: 0 14px 0 0; fill: none; stroke: #222; stroke-width: 1.400; }
.search .lbl { line-height: 24px; width: auto; }
.art { width: 87px; height: 41px; margin-left: auto; }
.taskview { width: 55px; background: #404040; display: flex; align-items: center; justify-content: center; padding: 0 2px 2px 0; }
.taskview svg { width: 21px; height: 20px; fill: none; stroke: #f5f5f5; stroke-width: 1; }
.task { position: relative; width: 54px; display: flex; align-items: center; justify-content: center; padding-left: 1px; }
.task svg { width: 27px; height: 27px; }
.task svg.wa { width: 38px; height: 32px; margin: 4px -10px 0 0; }
.task.full { background: linear-gradient(#76b9ed, #76b9ed) 5px 100% / 45px 2px no-repeat; }
.task.group { background: linear-gradient(90deg, #76b9ed 0 35px, #456f92 35px 36px, #5a8fba 36px) 5px 100% / 45px 2px no-repeat; }
.task.active { background: linear-gradient(#76b9ed, #76b9ed) 1px 100% / 53px 2px no-repeat, linear-gradient(90deg, #404040 0 1px, #696969 1px 50px, #3d3d3d 50px 51px, #575757 51px 54px); }
.tray { flex: 1; display: flex; align-items: center; padding-left: 34px; }
.tray svg { fill: none; stroke: #fff; stroke-width: 1.200; }
.t-chev { width: 12px; height: 7px; }
.t-sun { width: 16px; height: 16px; margin-left: 7px; }
.t-wifi { width: 13px; height: 13px; margin-left: 11px; }
.t-bat { width: 16px; height: 13px; margin-left: 7px; }
.t-vol { width: 17px; height: 13px; margin-left: 6px; }
.clock { width: 70px; margin-left: 24px; display: flex; flex-direction: column; align-items: center; font-size: 12.200px; line-height: 20px; margin-top: 2px; }
.t-note { width: 16px; height: 16px; margin-left: 15px; }
.peek { width: 1px; height: 43px; margin-left: 23px; background: #7d7d7d; }
</style>
